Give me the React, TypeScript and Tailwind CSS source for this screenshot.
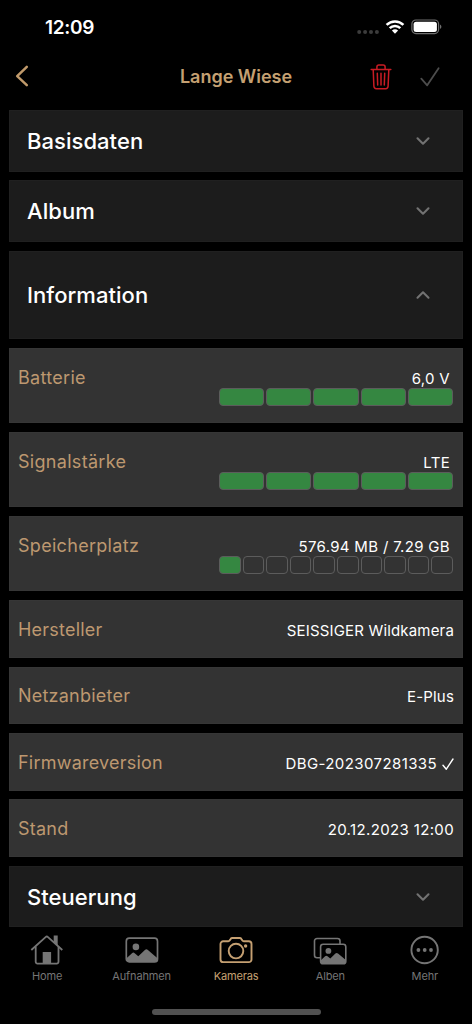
import React from 'react';

type BarItem = {
  label: string;
  value: string;
  total: number;
  filled: number;
};

const bars: BarItem[] = [
  { label: 'Batterie', value: '6,0 V', total: 5, filled: 5 },
  { label: 'Signalstärke', value: 'LTE', total: 5, filled: 5 },
  { label: 'Speicherplatz', value: '576.94 MB / 7.29 GB', total: 10, filled: 1 },
];

const details = [
  { label: 'Hersteller', value: 'SEISSIGER Wildkamera', spacing: 'tracking-[0.17px]', checked: false },
  { label: 'Netzanbieter', value: 'E-Plus', spacing: 'tracking-[0.17px]', checked: false },
  { label: 'Firmwareversion', value: 'DBG-202307281335', spacing: 'tracking-[0.4px]', checked: true },
  { label: 'Stand', value: '20.12.2023 12:00', spacing: 'tracking-[0.36px]', checked: false },
];

const HomeIcon = () => (
  <svg width="36" height="32" viewBox="0 0 36 32" fill="none" stroke="currentColor" strokeWidth="1.8">
    <path d="M2.3 16 16.6 3.1a1.8 1.8 0 0 1 2.4 0L33.3 16" />
    <path d="M6.7 12.5v15.3a1.8 1.8 0 0 0 1.8 1.8h19.2a1.8 1.8 0 0 0 1.8-1.8V12.5" />
    <path d="M13.7 18h8.4v11.6h-8.4z" fill="currentColor" stroke="none" />
    <path d="M24.7 1.4h4v10l-4-3.6z" fill="currentColor" stroke="none" />
  </svg>
);

const PhotoIcon = () => (
  <svg width="36" height="32" viewBox="0 0 36 32" fill="none">
    <rect x="2.3" y="4.2" width="31.2" height="23.7" rx="3" stroke="currentColor" strokeWidth="1.7" />
    <circle cx="11.9" cy="12.9" r="3.3" fill="currentColor" />
    <path
      d="M2.5 24.3 8 19.2a2 2 0 0 1 2.7 0l3.6 3 6.6-6.3a2.2 2.2 0 0 1 3 0l9.6 8.4v.8a3 3 0 0 1-3 3h-25a3 3 0 0 1-3-3z"
      fill="currentColor"
    />
  </svg>
);

const CameraIcon = () => (
  <svg width="36" height="32" viewBox="0 0 36 32" fill="none" stroke="currentColor" strokeWidth="1.9">
    <path d="M5.2 7.3h5.1c.6 0 1-.2 1.3-.7l1-1.6c.4-.7 1-1 1.8-1h7.2c.8 0 1.4.3 1.8 1l1 1.6c.3.5.7.7 1.3.7h5.1a2.7 2.7 0 0 1 2.7 2.7v15.4a2.7 2.7 0 0 1-2.7 2.7H5.2a2.7 2.7 0 0 1-2.7-2.7V10a2.7 2.7 0 0 1 2.7-2.7z" />
    <circle cx="18" cy="17.1" r="7.3" />
    <circle cx="27.6" cy="12" r="1.7" fill="currentColor" stroke="none" />
  </svg>
);

const AlbumsIcon = () => (
  <svg width="36" height="32" viewBox="0 0 36 32" fill="none">
    <path
      d="M8 23.7H5a2.5 2.5 0 0 1-2.5-2.5V7A2.5 2.5 0 0 1 5 4.5h20.5A2.5 2.5 0 0 1 28 7v3"
      stroke="currentColor"
      strokeWidth="1.6"
    />
    <rect x="8.6" y="10.2" width="25.2" height="19.6" rx="2.6" stroke="currentColor" strokeWidth="1.6" />
    <circle cx="16.4" cy="16.9" r="2.9" fill="currentColor" />
    <path
      d="m8.6 26.4 4.5-4.2a1.8 1.8 0 0 1 2.4 0l2.8 2.3 5.1-5a1.9 1.9 0 0 1 2.6 0l7.8 6.5v1.6a2.2 2.2 0 0 1-2.2 2.2H10.8a2.2 2.2 0 0 1-2.2-2.2z"
      fill="currentColor"
    />
  </svg>
);

const MoreIcon = () => (
  <svg width="36" height="32" viewBox="0 0 36 32" fill="none">
    <circle cx="17.6" cy="16" r="13.2" stroke="currentColor" strokeWidth="1.9" />
    <circle cx="11.4" cy="16" r="1.9" fill="currentColor" />
    <circle cx="17.7" cy="16" r="1.9" fill="currentColor" />
    <circle cx="24" cy="16" r="1.9" fill="currentColor" />
  </svg>
);

const tabs = [
  { label: 'Home', icon: HomeIcon, active: false },
  { label: 'Aufnahmen', icon: PhotoIcon, active: false },
  { label: 'Kameras', icon: CameraIcon, active: true },
  { label: 'Alben', icon: AlbumsIcon, active: false },
  { label: 'Mehr', icon: MoreIcon, active: false },
];

const StatusBar = () => (
  <div className="flex h-[54px] items-center justify-between pl-[45px] pr-[30px]">
    <span className="pt-0.5 text-[19px] leading-6 font-semibold tracking-[-0.3px] text-white">12:09</span>
    <div className="flex items-center">
      <svg width="24" height="18" viewBox="0 0 24 18" fill="#3c3c3c">
        <circle cx="3.2" cy="14" r="2" />
        <circle cx="9.1" cy="14" r="2" />
        <circle cx="15" cy="14" r="2" />
        <circle cx="20.9" cy="14" r="2" />
      </svg>
      <svg className="ml-[5px]" width="20" height="18" viewBox="0 0 20 18" fill="none" stroke="white" strokeWidth="2.6">
        <path d="M1.6 6.9a12 12 0 0 1 16.8 0" />
        <path d="M4.7 10.1a7.6 7.6 0 0 1 10.6 0" />
        <path d="M10 15.8 6.9 12.6a4.6 4.6 0 0 1 6.2 0z" fill="white" stroke="none" />
      </svg>
      <svg className="ml-[6px]" width="31" height="18" viewBox="0 0 31 18" fill="none">
        <rect x="0.9" y="2" width="26.7" height="13.6" rx="4" stroke="#6f6f6f" strokeWidth="1.2" />
        <rect x="2.6" y="3.7" width="23.3" height="10.2" rx="2.5" fill="white" />
        <path d="M29 6.6c1.9.8 1.9 3.6 0 4.4z" fill="#6f6f6f" />
      </svg>
    </div>
  </div>
);

const Header = () => (
  <header className="grid h-[46px] grid-cols-[1fr_auto_1fr] items-center">
    <svg className="ml-[15px] -mt-0.5" width="14" height="22" viewBox="0 0 14 22" fill="none" stroke="#c19a6b" strokeWidth="2.5" strokeLinecap="round" strokeLinejoin="round">
      <path d="M11.8 1.9 2.2 11.1l9.6 9" />
    </svg>
    <h1 className="text-[18px] leading-6 font-semibold text-[#c5a072]">Lange Wiese</h1>
    <div className="flex items-center justify-end gap-[28px] pr-[32px] pb-px">
      <svg width="22" height="26" viewBox="0 0 22 26" fill="none" stroke="#c91c24" strokeWidth="1.5" strokeLinecap="round" strokeLinejoin="round">
        <path d="M1.2 5.5h19.6" />
        <path d="M6.9 5.2V3.1c0-1.3.7-2 2-2h4.2c1.3 0 2 .7 2 2v2.1" />
        <path d="m3.2 5.7.7 16.6c.1 1.5 1 2.4 2.4 2.4h9.4c1.4 0 2.3-.9 2.4-2.4l.7-16.6" />
        <path d="m7.3 9.3.4 11.7M11 9.3V21M14.7 9.3 14.3 21" />
      </svg>
      <svg width="20" height="20" viewBox="0 0 20 20" fill="none" stroke="#4d4d4d" strokeWidth="1.8" strokeLinecap="round" strokeLinejoin="round">
        <path d="m1.3 11.7 5.9 6.6L18.6 1.3" />
      </svg>
    </div>
  </header>
);

const Section: React.FC<{ title: string; open?: boolean }> = ({ title, open }) => (
  <div
    className={`flex shrink-0 items-center justify-between border border-[#202020] bg-[#1c1c1c] pl-[17px] pr-[32px] ${
      open ? 'h-[88.5px]' : 'h-[61.7px]'
    }`}
  >
    <h2 className="text-[22px] leading-7 font-medium tracking-[0.05px] text-white">{title}</h2>
    <svg className={open ? 'rotate-180' : ''} width="14" height="10" viewBox="0 0 14 10" fill="none" stroke="#727272" strokeWidth="2.1" strokeLinecap="round" strokeLinejoin="round">
      <path d="m1.5 2.3 5.5 5.4 5.5-5.4" />
    </svg>
  </div>
);

const BarRow: React.FC<{ item: BarItem }> = ({ item }) => (
  <div className="flex h-[75.2px] shrink-0 justify-between border border-[#363636] bg-[#333333] pl-2 pr-[9px]">
    <span className="pt-[17px] text-[18px] leading-6 tracking-[0.3px] text-[#bd9870]">{item.label}</span>
    <div className="w-[234px] pt-5">
      <p className="pr-[3px] text-right text-[15px] leading-[19px] tracking-[0.32px] text-white">{item.value}</p>
      <div className="flex gap-[2px]">
        {Array.from({ length: item.total }, (_, i) => (
          <span
            key={i}
            className={`h-[18px] flex-1 rounded-[4px] border border-[#5c5c5c] ${i < item.filled ? 'bg-[#358741]' : ''}`}
          />
        ))}
      </div>
    </div>
  </div>
);

const App: React.FC = () => {
  return (
    <div className="flex h-[1024px] w-[472px] flex-col overflow-hidden bg-black font-['Inter',sans-serif]">
      <StatusBar />
      <Header />

      <main className="mt-[10px] flex h-[818px] shrink-0 flex-col gap-[8.8px] overflow-hidden px-[9px]">
        <Section title="Basisdaten" />
        <Section title="Album" />
        <Section title="Information" open />
        {bars.map((item) => (
          <BarRow key={item.label} item={item} />
        ))}
        {details.map((item) => (
          <div
            key={item.label}
            className="flex h-[57.6px] shrink-0 items-center justify-between border border-[#363636] bg-[#333333] px-2"
          >
            <span className="pt-[2px] text-[18px] leading-6 tracking-[0.22px] text-[#bd9870]">{item.label}</span>
            <span className={`flex items-center gap-[5px] pt-1 text-[15px] leading-5 text-white ${item.spacing}`}>
              {item.value}
              {item.checked && (
                <svg width="12" height="12" viewBox="0 0 12 12" fill="none" stroke="currentColor" strokeWidth="1.4" strokeLinecap="round" strokeLinejoin="round">
                  <path d="m1 7.2 3.3 4L11 1" />
                </svg>
              )}
            </span>
          </div>
        ))}
        <Section title="Steuerung" />
      </main>

      <nav className="grid grid-cols-5 pt-[6px]">
        {tabs.map(({ label, icon: Icon, active }) => (
          <div key={label} className={`flex flex-col items-center ${active ? 'text-[#c5a072]' : 'text-[#757575]'}`}>
            <Icon />
            <span className="mt-[2px] text-[11px] leading-4 tracking-[-0.15px]">{label}</span>
          </div>
        ))}
      </nav>
      <div className="mx-auto mt-[25px] h-[6px] w-[169px] shrink-0 rounded-full bg-[#515151]" />
    </div>
  );
};

export default App;
